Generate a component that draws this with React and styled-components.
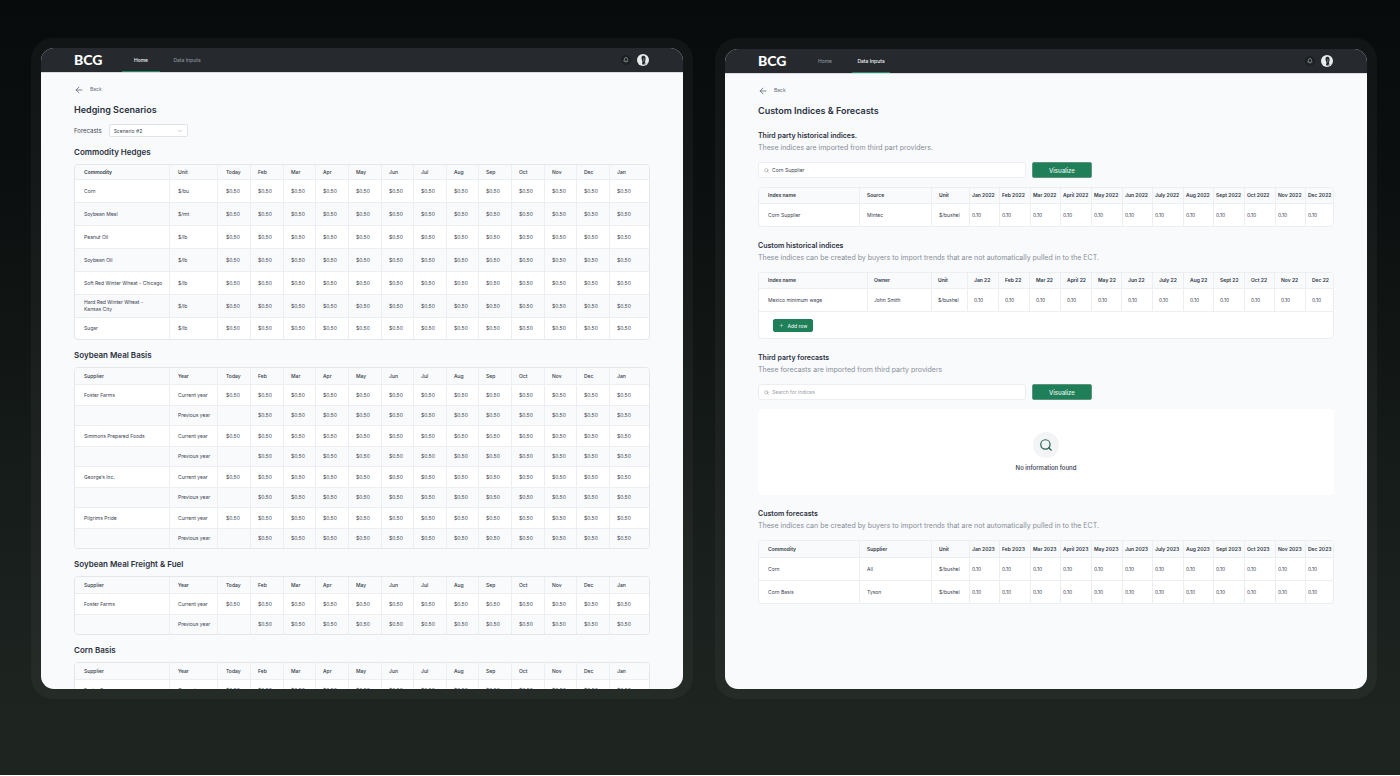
import React, { useState } from 'react';
import styled, { createGlobalStyle } from 'styled-components';
import { ArrowLeft, Bell, ChevronDown, Plus, Search } from 'lucide-react';

const GlobalStyle = createGlobalStyle`
  * {
    box-sizing: border-box;
  }
  body {
    margin: 0;
    background: #fff;
    font-family: Inter, "Liberation Sans", sans-serif;
    color: #3b4453;
  }
  h1, h2, h3, p {
    margin: 0;
  }
  button, input, select {
    font-family: inherit;
  }
`;

const Board = styled.div`
  display: grid;
  grid-template-columns: repeat(2, minmax(0, 1fr));
  gap: 22px;
  height: calc(100vh - 1px);
  padding: 38px 23px 76px 31px;
  background: linear-gradient(180deg, #070b0c 0%, #0b0f0f 22%, #161c1a 62%, #1d2420 90%, #1e2521 100%);
`;

const Frame = styled.section`
  min-height: 0;
  padding: ${p => p.$top}px 10px 10px;
  border-radius: 22px;
  background: rgba(255, 255, 255, 0.04);
`;

const Screen = styled.div`
  height: 100%;
  overflow: hidden;
  border-radius: 13px;
  background: #f9fafc;
`;

const TopBar = styled.header`
  display: flex;
  align-items: center;
  height: 24px;
  padding: 0 34px 0 33px;
  background: #26292e;
`;

const Logo = styled.a`
  width: 27px;
  margin-right: 21px;
  font-family: Lato, sans-serif;
  font-size: 14px;
  font-weight: 900;
  line-height: 24px;
  color: #fff;
  text-decoration: none;
`;

const Nav = styled.nav`
  display: flex;
  gap: 8px;
  flex: 1;
`;

const NavLink = styled.a`
  width: 38px;
  height: 24px;
  border-bottom: 1px solid ${p => (p.$active ? '#1e8a60' : 'transparent')};
  font-size: 5px;
  font-weight: 500;
  line-height: 24px;
  text-align: center;
  white-space: nowrap;
  text-decoration: none;
  color: ${p => (p.$active ? '#f1f2f4' : '#8b929c')};
`;

const IconButton = styled.button`
  display: flex;
  align-items: center;
  justify-content: center;
  width: 10px;
  height: 10px;
  margin-right: 6px;
  padding: 0;
  border: 0;
  border-radius: 50%;
  background: #1c2123;
  color: #c8ccd1;
`;

const Content = styled.main`
  padding: 11px 33px 0;
  border-top: 1px solid #d7dade;
`;

const BackLink = styled.a`
  display: flex;
  align-items: center;
  gap: 6px;
  font-size: 5px;
  line-height: 11px;
  color: #646c79;
  text-decoration: none;
`;

const PageTitle = styled.h1`
  margin-top: 8px;
  font-size: 9px;
  font-weight: 600;
  line-height: 13px;
  color: #2a3140;
`;

const FilterRow = styled.div`
  display: flex;
  align-items: center;
  gap: 7px;
  height: 13px;
  margin-top: 8px;
  font-size: 6px;
`;

const SelectBox = styled.div`
  position: relative;
  width: 79px;
  height: 13px;
  svg {
    position: absolute;
    top: 4px;
    right: 5px;
    pointer-events: none;
    color: #9aa1ab;
  }
`;

const Select = styled.select`
  display: block;
  width: 100%;
  height: 100%;
  padding: 0 4px;
  appearance: none;
  border: 1px solid #e0e3e8;
  border-radius: 2px;
  background: #fff;
  font-size: 5px;
  color: #3b4453;
`;

const TableTitle = styled.h2`
  margin: 10px 0 6px;
  font-size: 8px;
  font-weight: 600;
  line-height: 11px;
  color: #2a3140;
`;

const TableCard = styled.div`
  overflow: hidden;
  border: 1px solid ${p => p.$line};
  border-radius: 4px;
  background: #fff;
`;

const Table = styled.table`
  width: 100%;
  table-layout: fixed;
  border-collapse: separate;
  border-spacing: 0;
  font-size: 5px;
  line-height: 7px;

  th,
  td {
    padding: 0 0 0 ${p => p.$pad}px;
    border-right: 1px solid #eceef1;
    border-bottom: 1px solid #eceef1;
    text-align: left;
    white-space: pre;
  }
  th:nth-child(n + 4),
  td:nth-child(n + 4) {
    padding-left: ${p => p.$monthPad}px;
  }
  th:first-child,
  td:first-child {
    padding-left: 9px;
  }
  th:last-child,
  td:last-child {
    border-right: 0;
  }
  th {
    height: ${p => p.$head}px;
    background: #f9fafb;
    font-weight: ${p => p.$weight};
    color: #2f3746;
  }
  td {
    height: ${p => p.$row}px;
    color: #384150;
  }
`;

const HedgeTable = styled(Table)`
  th:first-child {
    font-weight: ${p => p.$firstWeight};
  }
  tbody tr:nth-child(even) td {
    height: ${p => p.$evenRow}px;
    background: #f9fafb;
  }
  tbody tr:last-child td {
    height: ${p => p.$lastRow}px;
    border-bottom: 0;
  }
`;

const IndexTable = styled(Table)`
  tbody tr:last-child td {
    height: ${p => p.$lastRow}px;
    border-bottom: ${p => (p.$footer ? '1px solid #eceef1' : '0')};
  }
`;

const Col = styled.col`
  width: ${p => p.$width}px;
`;

const Block = styled.section`
  margin-top: 13px;
`;

const BlockTitle = styled.h3`
  font-size: 7px;
  font-weight: 600;
  line-height: 12px;
  color: #2a3140;
`;

const BlockText = styled.p`
  margin-bottom: 8px;
  font-size: 7px;
  line-height: 12px;
  color: #878d97;
`;

const SearchRow = styled.form`
  display: flex;
  gap: 6px;
  height: 16px;
  margin-bottom: 9px;
`;

const SearchBox = styled.label`
  display: flex;
  align-items: center;
  gap: 3px;
  flex: 0 1 268px;
  padding: 0 5px;
  border: 1px solid #eceef1;
  border-radius: 3px;
  background: #fff;
  color: #6c7480;
`;

const SearchInput = styled.input`
  flex: 1;
  min-width: 0;
  padding: 0;
  border: 0;
  outline: 0;
  background: transparent;
  font-size: 5px;
  color: #3b4453;
  &::placeholder {
    color: #979da7;
  }
`;

const Button = styled.button`
  display: flex;
  align-items: center;
  justify-content: center;
  gap: 4px;
  width: ${p => (p.$small ? 40 : 60)}px;
  height: ${p => (p.$small ? 13 : 16)}px;
  padding: 0;
  border: 1px solid ${p => (p.$small ? '#1e7f59' : '#5c9480')};
  border-radius: 2px;
  background: #1e7f59;
  font-size: ${p => (p.$small ? 5 : 6)}px;
  font-weight: 500;
  color: #e6f1ec;
`;

const TableFooter = styled.div`
  padding: 7px 14px 6px;
`;

const EmptyCard = styled.div`
  display: flex;
  flex-direction: column;
  align-items: center;
  gap: 5px;
  padding: 23px 0 22px;
  border-radius: 4px;
  background: #fff;
  font-size: 6px;
  font-weight: 500;
  line-height: 10px;
  color: #2f3746;
`;

const EmptyIcon = styled.div`
  display: flex;
  align-items: center;
  justify-content: center;
  width: 26px;
  height: 26px;
  border-radius: 50%;
  background: #f2f4f6;
  color: #24604b;
`;

const hedgeMonths = ['Today', 'Feb', 'Mar', 'Apr', 'May', 'Jun', 'Jul', 'Aug', 'Sep', 'Oct', 'Nov', 'Dec', 'Jan'];
const indexMonths = ['Jan', 'Feb', 'Mar', 'April', 'May', 'Jun', 'July', 'Aug', 'Sept', 'Oct', 'Nov', 'Dec'];

const hedgeCols = [95, 48, 33, 33, 32, 33, 33, 32, 33, 32, 33, 33, 32, 33, 39];
const indexCols = [101, 72, 38, 30, 31, 30, 31, 31, 30, 31, 30, 31, 31, 30, 27];
const ownerCols = [109, 64, 36, 31, 31, 31, 31, 30, 31, 31, 30, 31, 30, 31, 27];

const commodities = [
  ['Corn', '$/bu'],
  ['Soybean Meal', '$/mt'],
  ['Peanut Oil', '$/lb'],
  ['Soybean Oil', '$/lb'],
  ['Soft Red Winter Wheat - Chicago', '$/lb'],
  ['Hard Red Winter Wheat -\nKansas City', '$/lb'],
  ['Sugar', '$/lb'],
];

const commodityRows = commodities.map(row => [...row, ...hedgeMonths.map(() => '$0.50')]);

const supplierRows = suppliers =>
  suppliers.flatMap(name => [
    [name, 'Current year', ...hedgeMonths.map(() => '$0.50')],
    ['', 'Previous year', ...hedgeMonths.map((m, i) => (i === 0 ? '' : '$0.50'))],
  ]);

const indexRow = (...cells) => [...cells, '$/bushel', ...indexMonths.map(() => '0.10')];

const TableContent = ({ cols, head, rows }) => (
  <>
    <colgroup>
      {cols.map((width, i) => (
        <Col key={i} $width={width} />
      ))}
    </colgroup>
    <thead>
      <tr>
        {head.map(label => (
          <th key={label} scope="col">
            {label}
          </th>
        ))}
      </tr>
    </thead>
    <tbody>
      {rows.map((row, r) => (
        <tr key={r}>
          {row.map((cell, c) => (
            <td key={c}>{cell}</td>
          ))}
        </tr>
      ))}
    </tbody>
  </>
);

const Avatar = () => (
  <svg width="12" height="12" viewBox="0 0 24 24" role="img" aria-label="Profile">
    <circle cx="12" cy="12" r="12" fill="#e9ebec" />
    <path d="M9 7c0-4 7-5 8 0 .5 3 0 6-1 8l1 5c-3 2-5 2-7 0l1-5c-1-2-2-5-2-8z" fill="#25292c" />
    <path d="M13 7c2 0 2 2 2 5l-1 3-2-1z" fill="#6b7073" />
    <path d="M13 21c1-2 3-3 5-3l1 1c-2 3-4 3-6 4z" fill="#a4a8aa" />
  </svg>
);

const Header = ({ active }) => (
  <TopBar>
    <Logo href="#">BCG</Logo>
    <Nav>
      {['Home', 'Data Inputs'].map(item => (
        <NavLink key={item} href="#" $active={item === active}>
          {item}
        </NavLink>
      ))}
    </Nav>
    <IconButton aria-label="Notifications">
      <Bell size={6} />
    </IconButton>
    <Avatar />
  </TopBar>
);

const Back = () => (
  <BackLink href="#">
    <ArrowLeft size={10} strokeWidth={2} />
    Back
  </BackLink>
);

const SupplierTable = ({ title, suppliers }) => (
  <>
    <TableTitle>{title}</TableTitle>
    <TableCard $line="#e3e6ea">
      <HedgeTable $pad={8} $monthPad={7} $head={17} $row={21} $evenRow={20} $lastRow={19} $weight={500} $firstWeight={500}>
        <TableContent cols={hedgeCols} head={['Supplier', 'Year', ...hedgeMonths]} rows={supplierRows(suppliers)} />
      </HedgeTable>
    </TableCard>
  </>
);

const SearchForm = ({ initial = '' }) => {
  const [query, setQuery] = useState(initial);

  return (
    <SearchRow onSubmit={e => e.preventDefault()}>
      <SearchBox>
        <Search size={5} />
        <SearchInput
          aria-label="Search for indices"
          placeholder="Search for indices"
          value={query}
          onChange={e => setQuery(e.target.value)}
        />
      </SearchBox>
      <Button type="submit">Visualize</Button>
    </SearchRow>
  );
};

const HedgingScenarios = () => (
  <Screen>
    <Header active="Home" />
    <Content>
      <Back />
      <PageTitle>Hedging Scenarios</PageTitle>
      <FilterRow>
        <label htmlFor="forecast">Forecasts</label>
        <SelectBox>
          <Select id="forecast" defaultValue="2">
            <option value="1">Scenario #1</option>
            <option value="2">Scenario #2</option>
          </Select>
          <ChevronDown size={6} />
        </SelectBox>
      </FilterRow>
      <TableTitle>Commodity Hedges</TableTitle>
      <TableCard $line="#e3e6ea">
        <HedgeTable $pad={8} $monthPad={7} $head={15} $row={23} $evenRow={23} $lastRow={21} $weight={500} $firstWeight={600}>
          <TableContent cols={hedgeCols} head={['Commodity', 'Unit', ...hedgeMonths]} rows={commodityRows} />
        </HedgeTable>
      </TableCard>
      <SupplierTable
        title="Soybean Meal Basis"
        suppliers={['Foster Farms', 'Simmons Prepared Foods', 'George’s Inc.', 'Pilgrims Pride']}
      />
      <SupplierTable title="Soybean Meal Freight & Fuel" suppliers={['Foster Farms']} />
      <SupplierTable title="Corn Basis" suppliers={['Foster Farms']} />
    </Content>
  </Screen>
);

const CustomIndices = () => (
  <Screen>
    <Header active="Data Inputs" />
    <Content>
      <Back />
      <PageTitle>Custom Indices &amp; Forecasts</PageTitle>
      <Block>
        <BlockTitle>Third party historical indices.</BlockTitle>
        <BlockText>These indices are imported from third part providers.</BlockText>
        <SearchForm initial="Corn Supplier" />
        <TableCard $line="#eceef1">
          <IndexTable $pad={7} $monthPad={2} $head={16} $row={22} $lastRow={22} $weight={600}>
            <TableContent
              cols={indexCols}
              head={['Index name', 'Source', 'Unit', ...indexMonths.map(m => `${m} 2022`)]}
              rows={[indexRow('Corn Supplier', 'Mintec')]}
            />
          </IndexTable>
        </TableCard>
      </Block>
      <Block>
        <BlockTitle>Custom historical indices</BlockTitle>
        <BlockText>
          These indices can be created by buyers to import trends that are not automatically pulled in to the ECT.
        </BlockText>
        <TableCard $line="#eceef1">
          <IndexTable $pad={6} $monthPad={6} $head={16} $row={23} $lastRow={23} $weight={600} $footer>
            <TableContent
              cols={ownerCols}
              head={['Index name', 'Owner', 'Unit', ...indexMonths.map(m => `${m} 22`)]}
              rows={[indexRow('Mexico minimum wage', 'John Smith')]}
            />
          </IndexTable>
          <TableFooter>
            <Button type="button" $small>
              <Plus size={5} />
              Add row
            </Button>
          </TableFooter>
        </TableCard>
      </Block>
      <Block>
        <BlockTitle>Third party forecasts</BlockTitle>
        <BlockText>These forecasts are imported from third party providers</BlockText>
        <SearchForm />
        <EmptyCard>
          <EmptyIcon>
            <Search size={14} />
          </EmptyIcon>
          No information found
        </EmptyCard>
      </Block>
      <Block>
        <BlockTitle>Custom forecasts</BlockTitle>
        <BlockText>
          These indices can be created by buyers to import trends that are not automatically pulled in to the ECT.
        </BlockText>
        <TableCard $line="#eceef1">
          <IndexTable $pad={7} $monthPad={2} $head={17} $row={23} $lastRow={22} $weight={600}>
            <TableContent
              cols={indexCols}
              head={['Commodity', 'Supplier', 'Unit', ...indexMonths.map(m => `${m} 2023`)]}
              rows={[indexRow('Corn', 'All'), indexRow('Corn Basis', 'Tyson')]}
            />
          </IndexTable>
        </TableCard>
      </Block>
    </Content>
  </Screen>
);

const App = () => (
  <>
    <GlobalStyle />
    <Board>
      <Frame $top={10}>
        <HedgingScenarios />
      </Frame>
      <Frame $top={11}>
        <CustomIndices />
      </Frame>
    </Board>
  </>
);

export default App;
